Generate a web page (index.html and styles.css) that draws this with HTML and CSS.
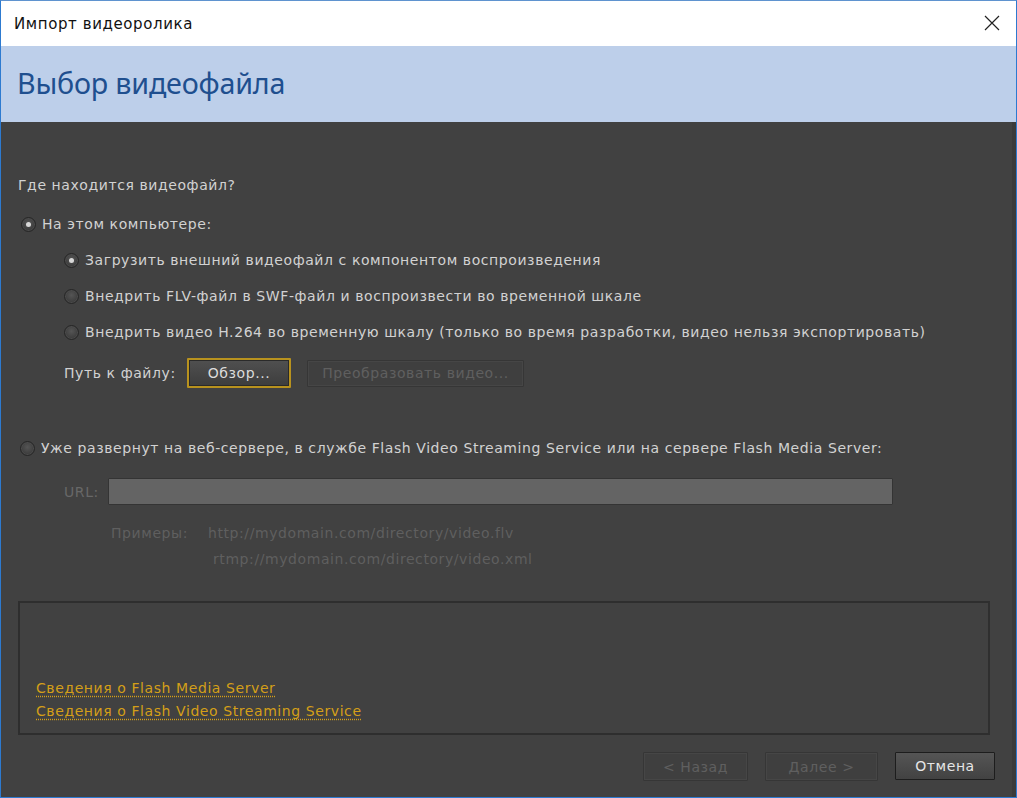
FILE: index.html
```html
<!DOCTYPE html>
<html lang="ru">
<head>
<meta charset="utf-8">
<title>Импорт видеоролика</title>
<link rel="stylesheet" href="styles.css">
</head>
<body>
<div class="window">
  <div class="titlebar">
    <span class="title">Импорт видеоролика</span>
    <svg class="close" width="16" height="16" viewBox="0 0 16 16"><path d="M1 1L15 15M15 1L1 15" stroke="#222" stroke-width="1.2" fill="none"/></svg>
  </div>
  <div class="header">Выбор видеофайла</div>
  <div class="body">
    <div class="question">Где находится видеофайл?</div>
    <div class="row r-main"><span class="radio on"></span><span>На этом компьютере:</span></div>
    <div class="sub">
      <div class="row r-sub"><span class="radio on"></span><span>Загрузить внешний видеофайл с компонентом воспроизведения</span></div>
      <div class="row r-sub"><span class="radio"></span><span>Внедрить FLV-файл в SWF-файл и воспроизвести во временной шкале</span></div>
      <div class="row r-sub"><span class="radio"></span><span>Внедрить видео H.264 во временную шкалу (только во время разработки, видео нельзя экспортировать)</span></div>
      <div class="pathrow">
        <span class="pathlabel">Путь к файлу:</span>
        <span class="btn focus">Обзор...</span>
        <span class="btn disabled convert">Преобразовать видео...</span>
      </div>
    </div>
    <div class="row r-main server"><span class="radio"></span><span>Уже развернут на веб-сервере, в службе Flash Video Streaming Service или на сервере Flash Media Server:</span></div>
    <div class="urlrow">
      <span class="urllabel">URL:</span>
      <span class="urlinput"></span>
    </div>
    <div class="examples">
      <span class="exlabel">Примеры:</span>
      <div class="exlist">
        <span>http://mydomain.com/directory/video.flv</span>
        <span class="ex2">rtmp://mydomain.com/directory/video.xml</span>
      </div>
    </div>
    <div class="infobox">
      <a class="link">Сведения о Flash Media Server</a>
      <a class="link">Сведения о Flash Video Streaming Service</a>
    </div>
    <div class="footer">
      <span class="btn disabled fbtn">&lt; Назад</span>
      <span class="btn disabled fbtn next">Далее &gt;</span>
      <span class="btn cancel">Отмена</span>
    </div>
  </div>
</div>
</body>
</html>
```
FILE: styles.css
```css
* { box-sizing: border-box; }
html, body { margin: 0; padding: 0; }
body { width: 1017px; height: 798px; overflow: hidden; background: #414141; }
.window {
  width: 1017px; height: 798px;
  border: 1px solid #2d7ad0;
  border-top-color: #5f93cf;
  display: flex; flex-direction: column;
  background: #414141;
}
.titlebar {
  height: 45px; background: #fff;
  display: flex; align-items: center; justify-content: space-between;
  padding: 0 16px 0 13px;
}
.title { font-family: "DejaVu Sans", "Noto Sans", sans-serif; font-size: 15px; letter-spacing: 0.6px; color: #111; }
.close { margin-top: -1px; }
.header {
  height: 76px; background: #bdcfea;
  font-family: "Noto Sans", "Open Sans", sans-serif; font-size: 28.7px; color: #1f4f8f;
  padding: 17px 0 0 16px; letter-spacing: -0.2px;
}
.body {
  flex: 1; display: flex; flex-direction: column;
  padding: 53px 0 0 17px;
  font-family: "DejaVu Sans", "Open Sans", sans-serif; font-size: 14px; color: #d2d2d2;
  letter-spacing: 0.58px;
  border-right: 4px solid #3a3a3a;
}
.question { height: 20px; line-height: 20px; }
.row { display: flex; align-items: center; height: 20px; line-height: 20px; }
.row > span:last-child { margin-left: 6px; }
.r-main { margin-top: 19px; padding-left: 3px; }
.sub { padding-left: 46px; display: flex; flex-direction: column; }
.r-sub { margin-top: 16px; }
.radio {
  width: 15px; height: 15px; border-radius: 50%; flex: none;
  background: radial-gradient(circle at 50% 40%, #555 0, #3c3c3c 70%);
  border: 1px solid #262626;
  box-shadow: inset 0 0 0 1px #4c4c4c;
  position: relative;
}
.radio.on::after {
  content: ""; position: absolute; left: 4px; top: 4px; width: 5px; height: 5px;
  border-radius: 50%; background: #d8d8d8;
}
.pathrow { display: flex; align-items: center; margin-top: 16px; height: 30px; }
.pathlabel { width: 123px; }
.btn {
  display: inline-flex; align-items: center; justify-content: center;
  height: 27px; border: 1px solid #262626; border-radius: 1px;
  background: linear-gradient(#4e4e4e, #3f3f3f);
  color: #dcdcdc;
}
.btn.focus {
  width: 104px; height: 30px; border: 2px solid #b8921e;
  background: linear-gradient(#505050, #3d3d3d);
  box-shadow: inset 0 0 0 1px #2a2a2a;
}
.btn.disabled {
  background: #3f3f3f; border: 1px solid #363636; color: #5f5f5f;
  box-shadow: inset 0 0 0 1px #464646;
}
.convert { width: 217px; margin-left: 16px; height: 27px; }
.server { margin-top: 50px; padding-left: 2px; }
.urlrow { display: flex; align-items: center; margin-top: 20px; padding-left: 46px; }
.urllabel { width: 44px; color: #686868; }
.urlinput {
  width: 785px; height: 27px; background: #646464;
  border: 1px solid #343434; border-radius: 1px;
}
.examples { display: flex; margin-top: 15px; padding-left: 93px; color: #5f5f5f; line-height: 26px; }
.exlabel { width: 97px; }
.exlist { display: flex; flex-direction: column; }
.ex2 { padding-left: 5px; }
.infobox {
  margin-top: 29px; height: 134px; width: 972px;
  border: 2px solid #2e2e2e; border-right-color: #2f2f2f;
  display: flex; flex-direction: column; justify-content: flex-end;
  padding: 0 0 10px 16px;
}
.link {
  color: #d49f18; font-size: 14px; line-height: 23px;
  text-decoration: underline dotted #d49f18; text-underline-offset: 3px;
  align-self: flex-start;
}
.footer { display: flex; justify-content: flex-end; margin-top: 17px; padding-right: 17px; }
.fbtn { width: 105px; height: 29px; }
.next { width: 113px; margin-left: 17px; }
.cancel { width: 100px; height: 28px; margin-left: 17px; border: 1px solid #1d1d1d;
  background: linear-gradient(#555, #424242); color: #e6e6e6; }
```
